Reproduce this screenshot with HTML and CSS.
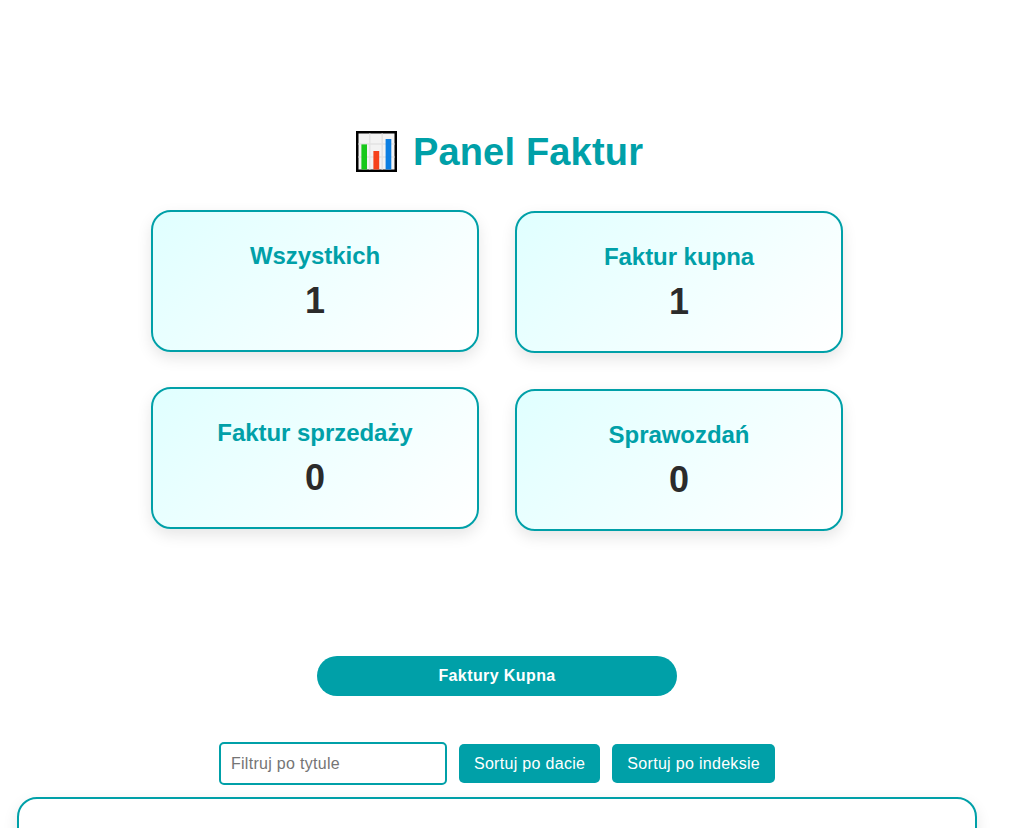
FILE: index.html
```html
<!DOCTYPE html>
<html lang="pl">
<head>
    <meta charset="UTF-8">
    <meta name="viewport" content="width=device-width, initial-scale=1.0">
    <title>Panel Faktur</title>
    <link rel="stylesheet" href="styles.css">
</head>
<body>
    <div class="page">
        <h1 class="title">
            <svg class="title-icon" width="41" height="41" viewBox="0 0 41 41">
                <rect x="1.25" y="1.25" width="38.5" height="38.5" fill="#f3f3f3" stroke="#000" stroke-width="2.5"/>
                <path d="M13.8 2.5v36M26.2 2.5v36M2.5 13h36M2.5 26h36" stroke="#e3e3e3" stroke-width="1.5" fill="none"/>
                <rect x="5.4" y="13.4" width="5.6" height="25.1" fill="#17c81a"/>
                <rect x="17.4" y="20" width="5.8" height="18.5" fill="#f6421b"/>
                <rect x="29.6" y="8" width="5.7" height="30.5" fill="#0c7fe2"/>
            </svg>
            <span class="title-text">Panel Faktur</span>
        </h1>

        <div class="stats">
            <div class="stats-col">
                <div class="card">
                    <h3>Wszystkich</h3>
                    <p>1</p>
                </div>
                <div class="card">
                    <h3>Faktur sprzedaży</h3>
                    <p>0</p>
                </div>
            </div>
            <div class="stats-col stats-col-right">
                <div class="card">
                    <h3>Faktur kupna</h3>
                    <p>1</p>
                </div>
                <div class="card">
                    <h3>Sprawozdań</h3>
                    <p>0</p>
                </div>
            </div>
        </div>

        <button class="tab-button">Faktury Kupna</button>

        <div class="controls">
            <input type="text" class="filter" placeholder="Filtruj po tytule">
            <button class="sort-button">Sortuj po dacie</button>
            <button class="sort-button">Sortuj po indeksie</button>
        </div>

        <div class="panel"></div>
    </div>
</body>
</html>
```

FILE: styles.css
```css
html, body {
    margin: 0;
    padding: 0;
    height: 828px;
    overflow: hidden;
    background: #ffffff;
    font-family: "Liberation Sans", Arial, sans-serif;
}

.page {
    width: 994px;
    height: 828px;
    overflow: hidden;
    padding-top: 131px;
    box-sizing: border-box;
    display: flex;
    flex-direction: column;
    align-items: center;
}

.page > * {
    flex: none;
}

.title {
    display: flex;
    align-items: center;
    gap: 16px;
    height: 41px;
    margin: 0 0 0 5px;
    font-size: 38px;
    font-weight: bold;
    letter-spacing: 0.18px;
    color: #00a0a8;
}

.title-text {
    padding-top: 2px;
}

.stats {
    display: flex;
    gap: 36px;
    margin-top: 38px;
}

.stats-col {
    display: flex;
    flex-direction: column;
    gap: 35px;
}

.stats-col-right {
    margin-top: 1px;
    gap: 36px;
}

.card {
    box-sizing: border-box;
    width: 328px;
    height: 142px;
    padding-top: 30px;
    border: 2px solid #00a0a8;
    border-radius: 20px;
    background: linear-gradient(135deg, #e0ffff, #ffffff);
    box-shadow: 0 6px 15px rgba(0, 0, 0, 0.1);
    text-align: center;
}

.card h3 {
    margin: 0;
    font-size: 24px;
    line-height: 27px;
    font-weight: bold;
    letter-spacing: -0.05px;
    color: #00a0a8;
}

.card p {
    margin: 11px 0 0;
    font-size: 36px;
    line-height: 41px;
    font-weight: bold;
    color: #2b2b2b;
}

.tab-button {
    width: 360px;
    height: 40px;
    margin-top: 125px;
    border: none;
    border-radius: 20px;
    background: #00a0a8;
    color: #ffffff;
    font-family: inherit;
    font-size: 16px;
    font-weight: bold;
    letter-spacing: 0.4px;
}

.controls {
    display: flex;
    align-items: center;
    gap: 12px;
    margin-top: 46px;
}

.filter {
    box-sizing: border-box;
    width: 228px;
    height: 43px;
    padding: 0 10px;
    border: 2px solid #00a0a8;
    border-radius: 5px;
    font-family: inherit;
    font-size: 16px;
    letter-spacing: 0.3px;
}

.sort-button {
    height: 39px;
    padding: 0 15px;
    border: none;
    border-radius: 5px;
    background: #00a0a8;
    color: #ffffff;
    font-family: inherit;
    font-size: 16px;
    letter-spacing: 0.31px;
}

.panel {
    box-sizing: border-box;
    width: 960px;
    height: 200px;
    margin-top: 12px;
    border: 2px solid #00a0a8;
    border-radius: 20px;
    box-shadow: 0 6px 15px rgba(0, 0, 0, 0.1);
}
```
